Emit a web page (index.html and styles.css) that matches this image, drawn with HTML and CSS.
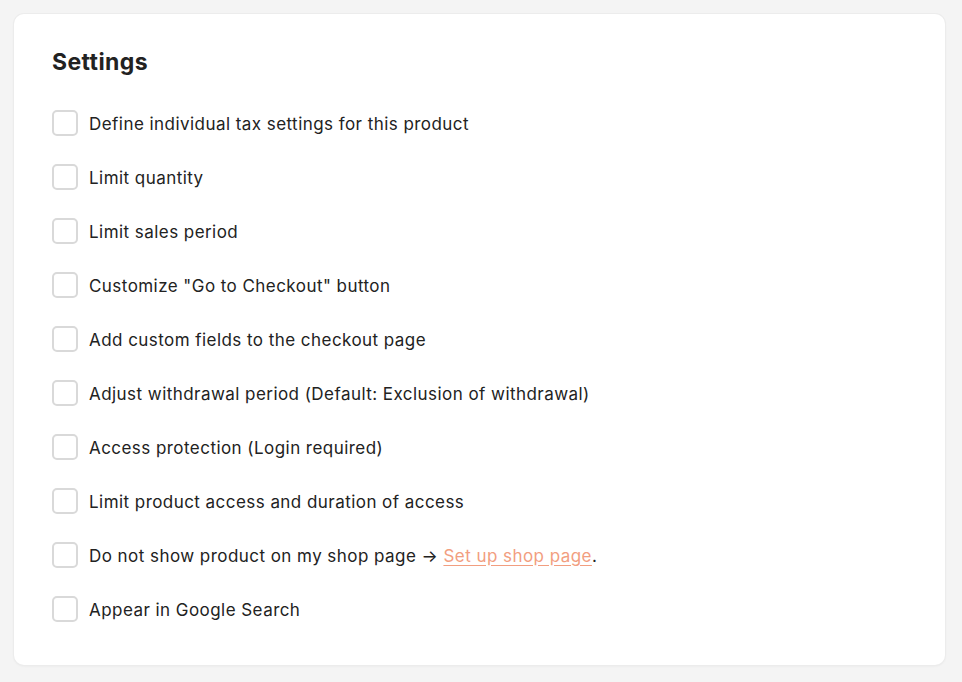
FILE: index.html
```html
<!DOCTYPE html>
<html lang="en">
<head>
<meta charset="utf-8">
<title>Settings</title>
<link rel="stylesheet" href="styles.css">
</head>
<body>
<section class="card">
  <h2 class="title">Settings</h2>
  <ul class="options">
    <li class="option"><span class="box"></span><span class="label">Define individual tax settings for this product</span></li>
    <li class="option"><span class="box"></span><span class="label">Limit quantity</span></li>
    <li class="option"><span class="box"></span><span class="label">Limit sales period</span></li>
    <li class="option"><span class="box"></span><span class="label">Customize "Go to Checkout" button</span></li>
    <li class="option"><span class="box"></span><span class="label">Add custom fields to the checkout page</span></li>
    <li class="option"><span class="box"></span><span class="label">Adjust withdrawal period (Default: Exclusion of withdrawal)</span></li>
    <li class="option"><span class="box"></span><span class="label">Access protection (Login required)</span></li>
    <li class="option"><span class="box"></span><span class="label">Limit product access and duration of access</span></li>
    <li class="option"><span class="box"></span><span class="label">Do not show product on my shop page → <a class="link" href="#">Set up shop page</a>.</span></li>
    <li class="option"><span class="box"></span><span class="label">Appear in Google Search</span></li>
  </ul>
</section>
</body>
</html>
```

FILE: styles.css
```css
html, body {
  margin: 0;
  padding: 0;
}
body {
  background: #f4f4f4;
  font-family: Inter, "Noto Sans", "Liberation Sans", sans-serif;
  color: #222222;
  padding: 14px 17px 17px 14px;
}
.card {
  background: #ffffff;
  border-radius: 10px;
  box-shadow: 0 0 0 1px #ececec, 0 1px 3px rgba(0,0,0,0.06);
  padding: 34px 38px 42px 38px;
  height: 651px;
  box-sizing: border-box;
}
.title {
  margin: 0;
  font-size: 23px;
  line-height: 28px;
  font-weight: 700;
  letter-spacing: 0.4px;
  color: #222222;
}
.options {
  list-style: none;
  margin: 34px 0 0 0;
  padding: 0;
  display: flex;
  flex-direction: column;
  gap: 28px;
}
.option {
  display: flex;
  align-items: center;
  gap: 11px;
  height: 26px;
}
.box {
  width: 26px;
  height: 26px;
  box-sizing: border-box;
  border: 2px solid #d9d9d9;
  border-radius: 5px;
  flex: none;
}
.label {
  font-size: 17px;
  line-height: 24px;
  letter-spacing: 0.45px;
  color: #222222;
  padding-top: 1px;
}
.link {
  color: #f29e80;
  text-decoration: underline;
  text-underline-offset: 3px;
}
```
